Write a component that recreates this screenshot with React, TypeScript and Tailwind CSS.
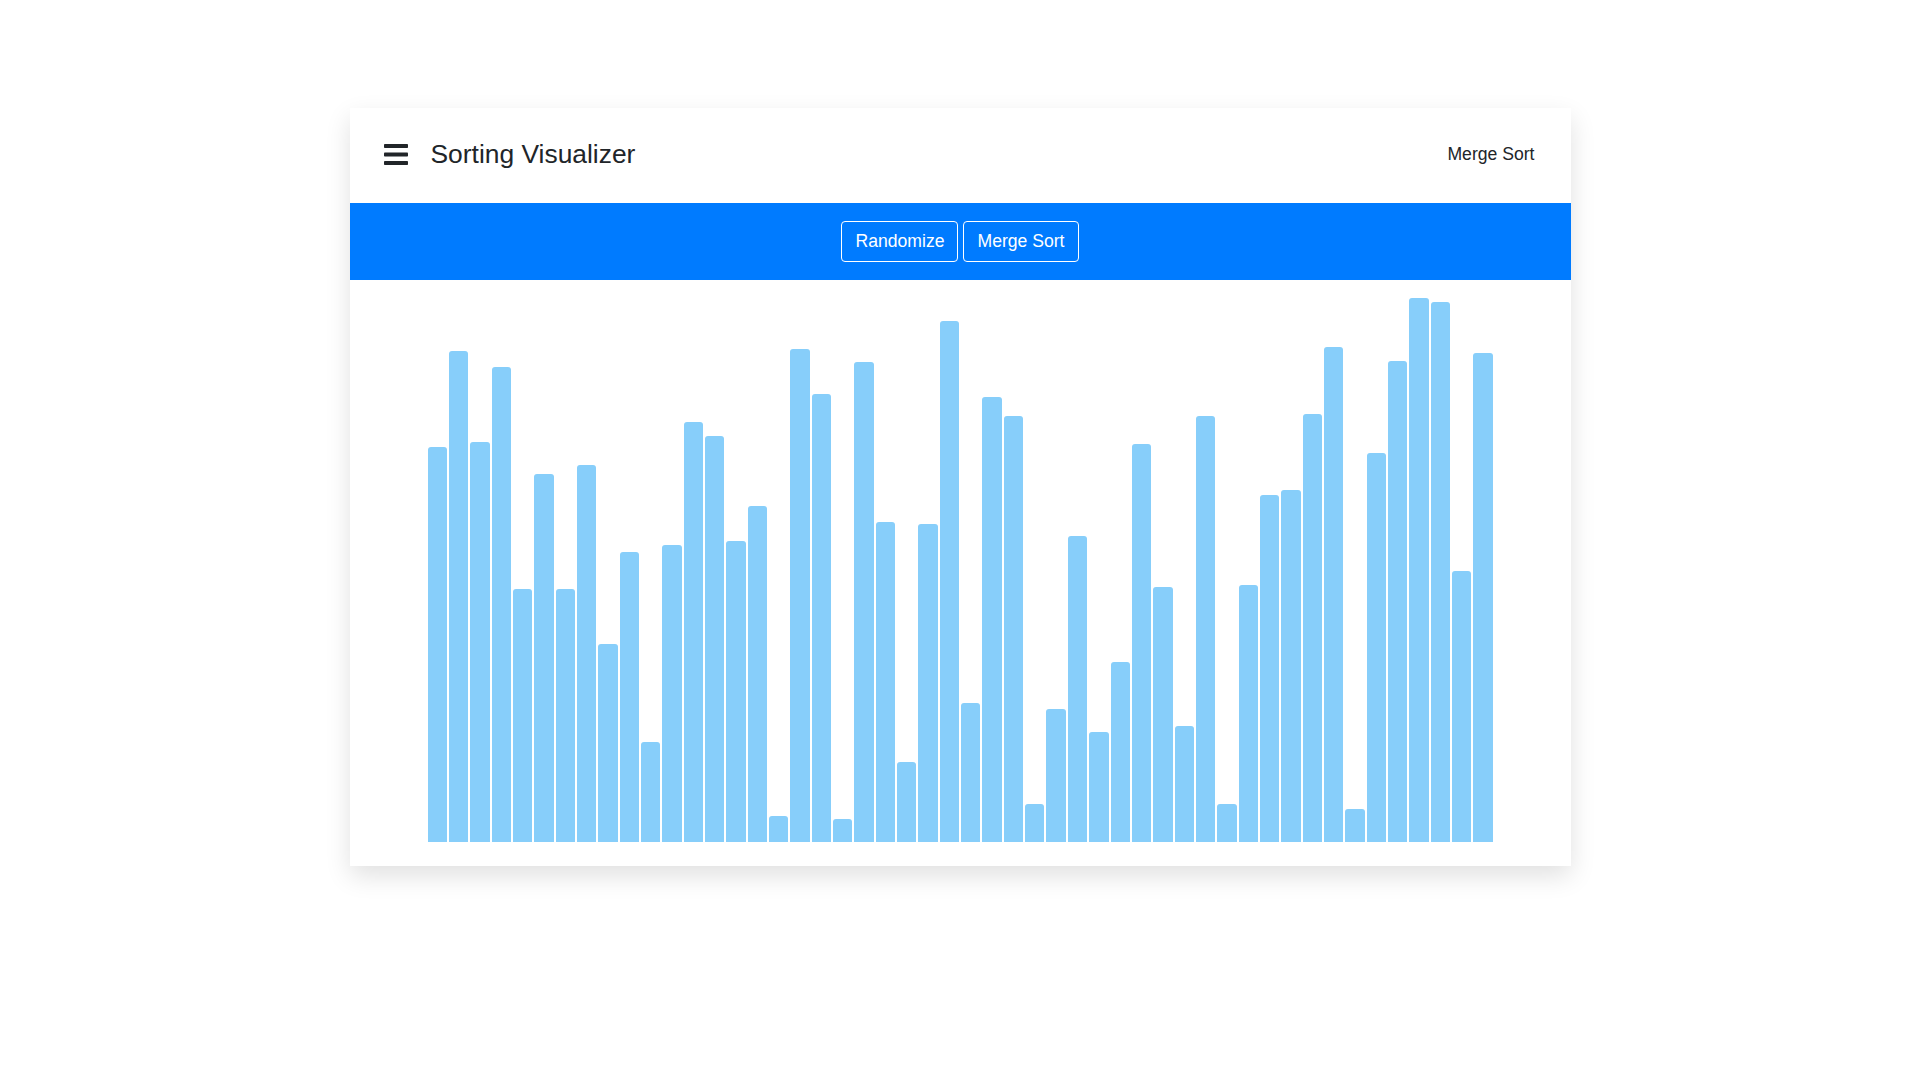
import React from "react";

const tops = [
  365, 287, 361, 300, 481, 387, 481, 380, 526, 451, 606, 445, 345, 356, 442, 413, 666, 285, 322, 669,
  296, 426, 622, 428, 262, 574, 324, 340, 657, 579, 438, 598, 541, 363, 479, 593, 340, 657, 478, 404,
  400, 338, 283, 661, 370, 295, 243, 247, 466, 288,
];

const heights = tops.map((t) => Math.round(842 - t * 1.2245));

function Bars() {
  return (
    <svg width="24" height="22" viewBox="0 0 24 22" className="block">
      <rect x="0" y="0" width="24" height="4" rx="0.8" fill="#212529" />
      <rect x="0" y="8.5" width="24" height="4" rx="0.8" fill="#212529" />
      <rect x="0" y="17" width="24" height="4" rx="0.8" fill="#212529" />
    </svg>
  );
}

export default function App() {
  return (
    <div
      className="min-h-[1080px] bg-white pt-[108px]"
      style={{ fontFamily: '"Liberation Sans", Arial, sans-serif' }}
    >
      <div className="mx-auto w-[1221px] bg-white shadow-[0_10px_24px_rgba(0,0,0,0.12)]">
        <div className="flex h-[95px] items-center justify-between pb-[2px] pl-[34px] pr-[36px]">
          <div className="flex items-center gap-[23px]">
            <Bars />
            <span className="text-[26.4px] leading-none text-[#212529]">Sorting Visualizer</span>
          </div>
          <span className="text-[17.6px] leading-none text-[#212529]">Merge Sort</span>
        </div>
        <div className="flex h-[77px] items-center justify-center gap-[5px] bg-[#007bff]">
          <button className="h-[41px] rounded-[4px] border border-white px-[13px] text-[17.6px] text-white">
            Randomize
          </button>
          <button className="h-[41px] rounded-[4px] border border-white px-[13px] text-[17.6px] text-white">
            Merge Sort
          </button>
        </div>
        <div className="flex h-[586px] items-end justify-center pb-[24px]">
          <div className="flex w-[1067px] items-end">
            {heights.map((h, i) => (
              <div
                key={i}
                className="mx-[1px] flex-1 rounded-t-[3px] bg-[#87cefa]"
                style={{ height: h }}
              />
            ))}
          </div>
        </div>
      </div>
    </div>
  );
}
